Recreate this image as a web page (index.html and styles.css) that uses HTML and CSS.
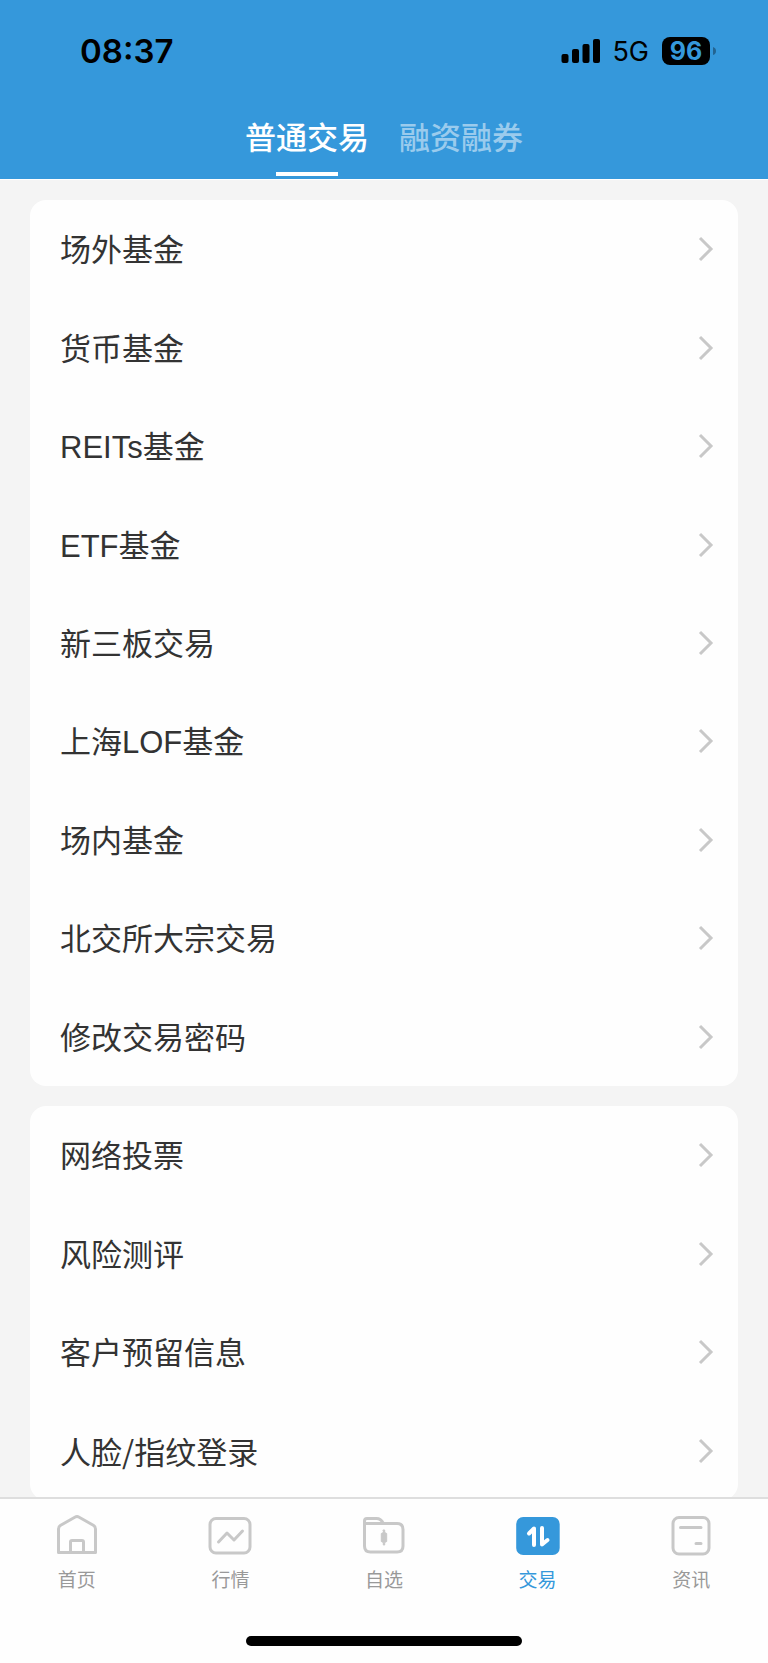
FILE: index.html
```html
<!DOCTYPE html>
<html lang="zh-CN">
<head>
<meta charset="utf-8">
<meta name="viewport" content="width=device-width, initial-scale=1">
<title>普通交易</title>
<link rel="stylesheet" href="styles.css">
</head>
<body>
<svg class="sprite" aria-hidden="true">
  <symbol id="chevron" viewBox="0 0 16 26"><path d="M2 2l11 11L2 24"/></symbol>
</svg>
<div class="app">
  <header class="header">
    <div class="status">
      <time class="clock">08:37</time>
      <div class="indicators">
        <svg class="signal" viewBox="0 0 39 25" aria-hidden="true">
          <rect x="0.500" y="15" width="7" height="9" rx="2"/>
          <rect x="11" y="10" width="7" height="14" rx="2"/>
          <rect x="21.500" y="5" width="7" height="19" rx="2"/>
          <rect x="32" y="0" width="7" height="24" rx="2"/>
        </svg>
        <span class="network">5G</span>
        <span class="battery"><span class="level">96</span><svg class="nub" viewBox="0 0 3 8" aria-hidden="true"><path d="M0 0Q3 1 3 4Q3 7 0 8z"/></svg></span>
      </div>
    </div>
    <nav class="tabs">
      <a class="tab active" href="#normal" aria-current="page">普通交易</a>
      <a class="tab" href="#margin">融资融券</a>
    </nav>
  </header>

  <main class="content">
    <nav class="card card-funds">
      <a class="row" href="#"><span class="label">场外基金</span><svg class="chevron"><use href="#chevron"/></svg></a>
      <a class="row" href="#"><span class="label">货币基金</span><svg class="chevron"><use href="#chevron"/></svg></a>
      <a class="row" href="#"><span class="label">REITs基金</span><svg class="chevron"><use href="#chevron"/></svg></a>
      <a class="row" href="#"><span class="label">ETF基金</span><svg class="chevron"><use href="#chevron"/></svg></a>
      <a class="row" href="#"><span class="label">新三板交易</span><svg class="chevron"><use href="#chevron"/></svg></a>
      <a class="row" href="#"><span class="label">上海LOF基金</span><svg class="chevron"><use href="#chevron"/></svg></a>
      <a class="row" href="#"><span class="label">场内基金</span><svg class="chevron"><use href="#chevron"/></svg></a>
      <a class="row" href="#"><span class="label">北交所大宗交易</span><svg class="chevron"><use href="#chevron"/></svg></a>
      <a class="row" href="#"><span class="label">修改交易密码</span><svg class="chevron"><use href="#chevron"/></svg></a>
    </nav>
    <nav class="card card-account">
      <a class="row" href="#"><span class="label">网络投票</span><svg class="chevron"><use href="#chevron"/></svg></a>
      <a class="row" href="#"><span class="label">风险测评</span><svg class="chevron"><use href="#chevron"/></svg></a>
      <a class="row" href="#"><span class="label">客户预留信息</span><svg class="chevron"><use href="#chevron"/></svg></a>
      <a class="row" href="#"><span class="label">人脸<span class="slash">/</span>指纹登录</span><svg class="chevron"><use href="#chevron"/></svg></a>
    </nav>
  </main>

  <footer class="footer">
    <nav class="tabbar">
      <a class="item" href="#home">
        <svg class="icon" viewBox="0 0 46 44" aria-hidden="true"><path d="M4.500 39.500V16q0-2.500 2.200-3.800L20.800 4.200q2.200-1.200 4.400 0L39.300 12.200q2.200 1.300 2.200 3.800V39.500zM16.500 39.500V29q0-1.500 1.500-1.500h10q1.500 0 1.500 1.500V39.500"/></svg>
        <span>首页</span>
      </a>
      <a class="item" href="#market">
        <svg class="icon" viewBox="0 0 46 44" aria-hidden="true"><rect x="3" y="5.500" width="40" height="34.500" rx="6"/><path d="M11.500 29l8.500-9 7 7 8.500-9"/></svg>
        <span>行情</span>
      </a>
      <a class="item" href="#watchlist">
        <svg class="icon" viewBox="0 0 46 44" aria-hidden="true"><path d="M3.500 33V8q0-2.500 2.500-2.500h9.500q4.500 0 6.800 5H36q6 0 6 6V33q0 6-6 6H9.500q-6 0-6-6zM3.500 10.500h19"/><path class="solid" d="M22.300 17h1.400v2.500l2 1v8l-2 1V32h-1.400v-2.500l-2-1v-8l2-1z"/></svg>
        <span>自选</span>
      </a>
      <a class="item active" href="#trade" aria-current="page">
        <svg class="icon" viewBox="0 0 46 44" aria-hidden="true"><rect class="tile" x="1.200" y="4" width="43.500" height="38" rx="7"/><path class="arrows" d="M14 20.500L19 15.500V32M27 15V31.500l5.500-4.500"/></svg>
        <span>交易</span>
      </a>
      <a class="item" href="#news">
        <svg class="icon" viewBox="0 0 46 44" aria-hidden="true"><rect x="5" y="4.500" width="36" height="36.500" rx="6"/><path d="M12.500 14.500h20.500M28 30.500h5"/></svg>
        <span>资讯</span>
      </a>
    </nav>
    <div class="home-indicator"></div>
  </footer>
</div>
</body>
</html>
```
FILE: styles.css
```css
* {
  box-sizing: border-box;
}

body {
  margin: 0;
  font-family: "Liberation Sans", "Noto Sans CJK SC", sans-serif;
  background: #f4f4f4;
}

a {
  color: inherit;
  text-decoration: none;
}

.sprite {
  display: none;
}

.app {
  display: flex;
  flex-direction: column;
  height: 100vh;
}

.header {
  flex: none;
  background: #3598db;
  border-bottom: 1px solid #fff;
}

.status {
  display: flex;
  align-items: center;
  justify-content: space-between;
  height: 102px;
  padding: 0 52px 0 80px;
  font-family: Inter, sans-serif;
  color: #000;
}

.clock {
  font-size: 33px;
  font-weight: 600;
}

.indicators {
  display: flex;
  align-items: center;
}

.signal {
  width: 39px;
  height: 25px;
  margin-right: 12px;
}

.network {
  margin-right: 13px;
  font-size: 27px;
}

.battery {
  display: flex;
  align-items: center;
  gap: 3px;
}

.level {
  width: 48px;
  border-radius: 8px;
  background: #000;
  color: #3598db;
  font-size: 25px;
  font-weight: 700;
  line-height: 28px;
  text-align: center;
}

.nub {
  width: 3px;
  height: 8px;
  fill: #236491;
}

.tabs {
  display: flex;
  justify-content: center;
  gap: 30px;
  padding-bottom: 3px;
}

.tab {
  display: flex;
  flex-direction: column;
  align-items: center;
  justify-content: space-between;
  height: 74px;
  font-family: "Noto Sans CJK SC", sans-serif;
  font-size: 31px;
  font-weight: 500;
  line-height: 68px;
  color: #9acbed;
}

.tab.active {
  color: #fff;
}

.tab.active::after {
  content: "";
  width: 50%;
  height: 4px;
  flex: none;
  background: #fff;
}

.content {
  display: flex;
  flex: 1;
  flex-direction: column;
  gap: 20px;
  min-height: 0;
  padding: 20px 30px 0;
  overflow: hidden;
}

.card {
  display: grid;
  flex: none;
  grid-auto-rows: 1fr;
  border-radius: 16px;
  background: #fefefe;
}

.card-funds {
  min-height: 886px;
}

.card-account {
  min-height: 394px;
}

.row {
  display: flex;
  align-items: center;
  justify-content: space-between;
  padding: 0 24px 0 30px;
  font-size: 31px;
  line-height: 46px;
  color: #333;
}

.label {
  padding-top: 4px;
}

.slash {
  font-family: "Noto Sans CJK SC", sans-serif;
}

.chevron {
  width: 16px;
  height: 26px;
  fill: none;
  stroke: #c8c8c8;
  stroke-width: 3;
}

.footer {
  flex: none;
  padding-bottom: 17px;
  border-top: 2px solid #dedede;
  background: #fefefe;
}

.tabbar {
  display: flex;
  height: 137px;
  padding-top: 14px;
}

.item {
  display: flex;
  flex: 1;
  flex-direction: column;
  align-items: center;
  gap: 10px;
  font-size: 19px;
  line-height: 28px;
  color: #999;
}

.item.active {
  color: #3598db;
}

.icon {
  width: 46px;
  height: 44px;
  fill: none;
  stroke: #c8c8c8;
  stroke-width: 3;
  stroke-linecap: round;
  stroke-linejoin: round;
}

.icon .solid {
  fill: #c8c8c8;
  stroke-width: 1;
}

.icon .tile {
  fill: #3598db;
  stroke: none;
}

.icon .arrows {
  stroke: #fff;
  stroke-width: 4;
}

.home-indicator {
  width: 36%;
  height: 10px;
  margin: 0 auto;
  border-radius: 5px;
  background: #000;
}
```
